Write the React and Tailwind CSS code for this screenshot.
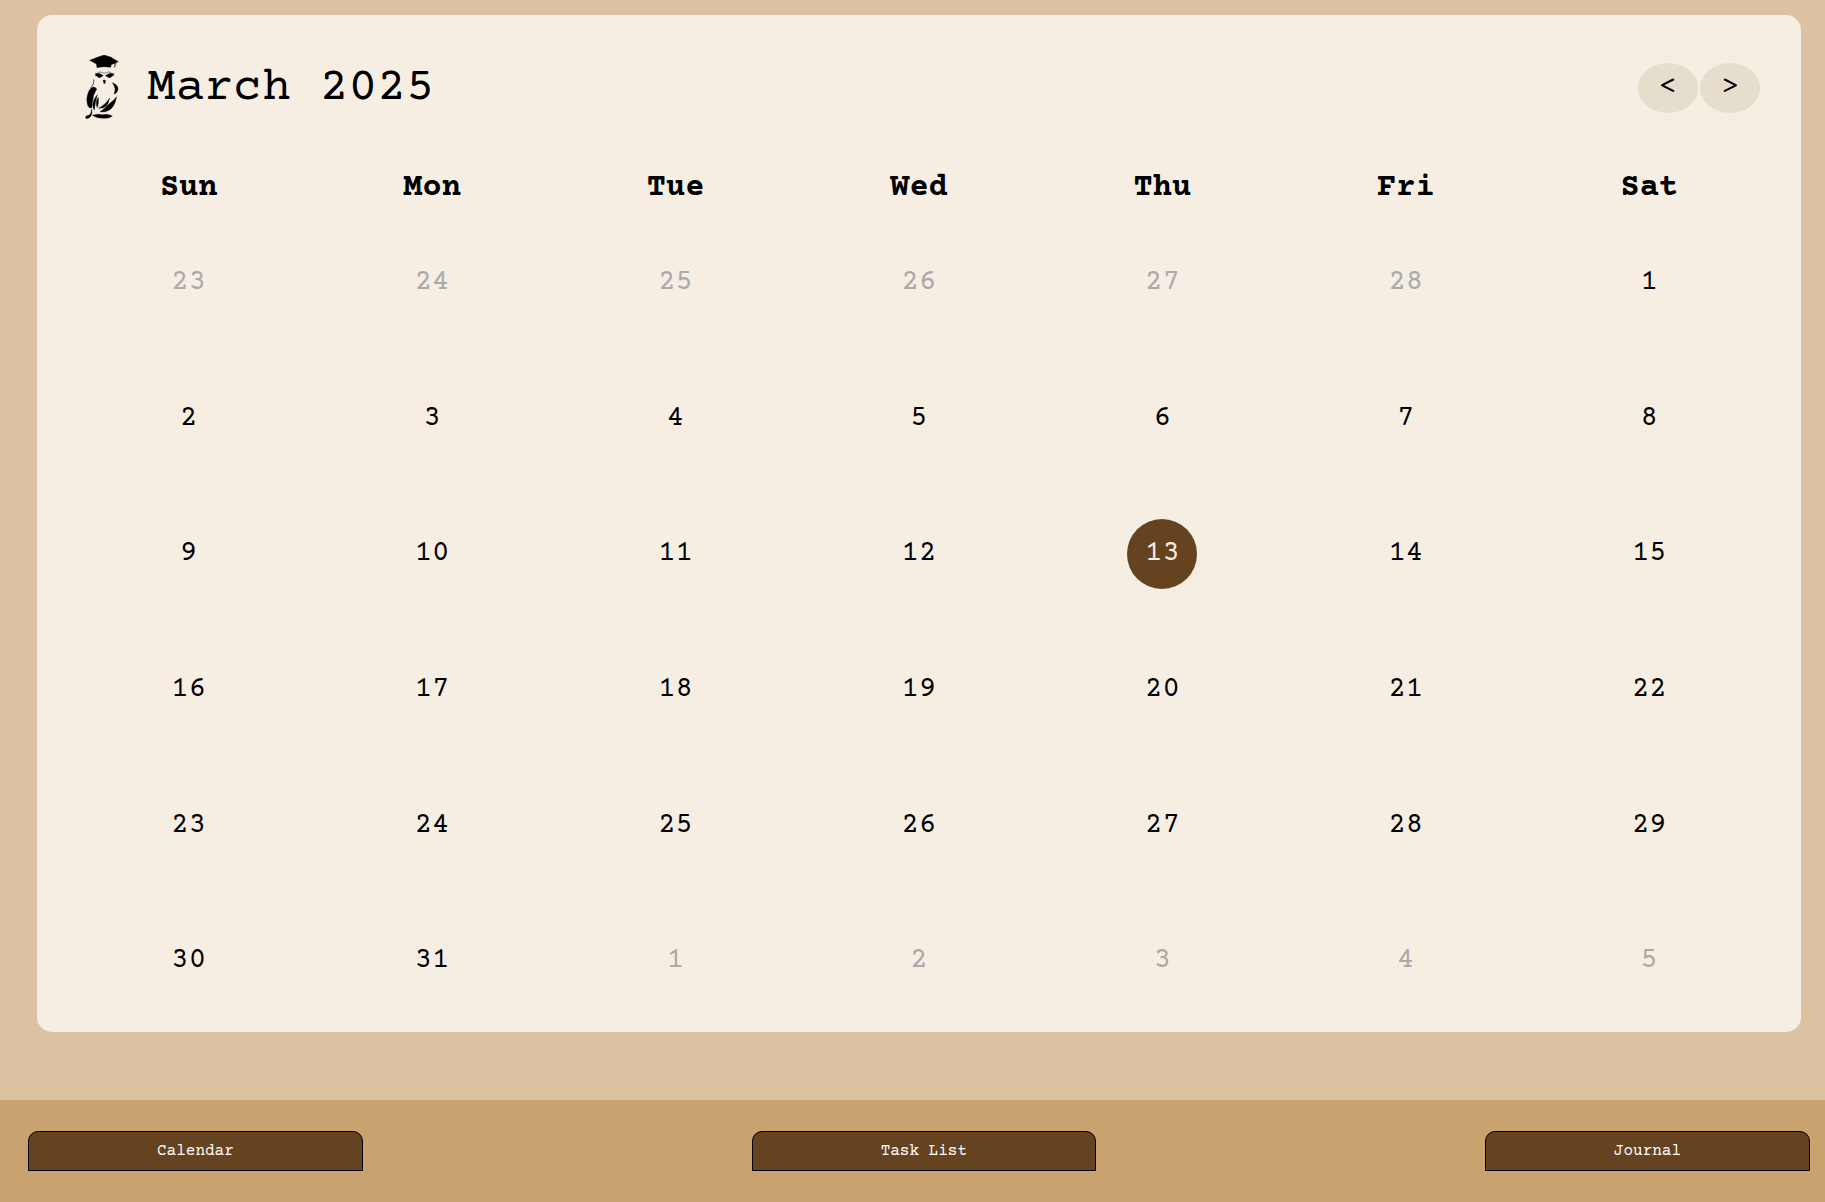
const DAYS = ["Sun", "Mon", "Tue", "Wed", "Thu", "Fri", "Sat"];
const TABS = ["Calendar", "Task List", "Journal"];
const TODAY = 13;

const previous = [23, 24, 25, 26, 27, 28].map((day) => ({ day, muted: true }));
const current = Array.from({ length: 31 }, (_, i) => ({ day: i + 1, muted: false }));
const next = [1, 2, 3, 4, 5].map((day) => ({ day, muted: true }));
const cells = [...previous, ...current, ...next];
const weeks = Array.from({ length: 6 }, (_, i) => cells.slice(i * 7, i * 7 + 7));

function Owl() {
  return (
    <svg
      viewBox="44 45 102 192"
      className="h-16 w-[34px] stroke-black stroke-1"
      role="img"
      aria-label="Owl logo"
    >
      <path d="M58 61 L83 51 L101 45 L121 51 L144 65 L123 74 L121 82 Q101 78 80 83 L78 72 Z" />
      <path d="M133 67 L137 69 L134 82 L132 82 Z" opacity="0.7" />
      <path d="M74 101 Q84 98 93 103 L99 107 Q94 109 92 112 Q84 115 79 108 Q77 106 74 107 Q80 105 74 101 Z" />
      <path d="M131 101 Q121 98 112 103 L105 107 Q111 109 113 112 Q121 115 126 108 Q128 106 132 107 Q126 105 131 101 Z" />
      <path d="M82 97 Q94 94 102 100 Q111 94 122 97" fill="none" strokeWidth="2" opacity="0.7" />
      <path d="M98 121 Q102 118 106 122 L104 130 L101 131 Z" />
      <path d="M70 118 Q73 130 61 144 Q66 139 69 132 Q72 124 70 118 Z" />
      <path d="M70 141 Q84 145 76 153 Q68 165 67 182 L64 204 Q54 206 51 192 Q47 176 52 163 Q57 143 70 141 Z" />
      <path d="M81 164 Q69 177 67 195 Q68 205 72 210 Q74 188 81 164 Z" />
      <path d="M84 172 Q73 187 81 203 Q86 190 84 172 Z" />
      <path d="M126 128 Q144 134 143 148 Q141 160 131 162 Q139 146 126 128 Z" />
      <path d="M118 174 Q107 193 85 205 Q112 207 118 174 Z" />
      <path d="M139 170 Q128 184 113 194 Q102 206 89 216 Q118 217 129 198 Q136 186 139 170 Z" />
      <path d="M64 207 Q63 221 56 226 Q47 226 45 232 Q47 238 54 235 Q68 227 64 207 Z" />
      <path d="M66 226 Q82 220 96 224 Q112 220 126 228 Q118 236 102 235 Q80 236 66 226 Z" />
    </svg>
  );
}

function MonthButton({ label, children }) {
  return (
    <button
      type="button"
      aria-label={label}
      className="h-[50px] w-[60px] rounded-[50%] bg-[#e5decd] text-[29px]"
    >
      {children}
    </button>
  );
}

export default function App() {
  return (
    <div className="flex min-h-screen flex-col bg-[#dbc3a1] font-['Courier_Prime','Liberation_Mono',monospace] text-black">
      <main className="mt-[15px] mr-6 mb-[68px] ml-[37px] flex flex-1 flex-col rounded-[15px] bg-[#f6eee3] px-[30px] pt-10 pb-[3px]">
        <header className="flex items-center pr-[11px] pl-[18px]">
          <Owl />
          <h1 className="ml-7 pt-0.5 text-5xl">March 2025</h1>
          <nav aria-label="Month" className="ml-auto flex gap-0.5 pt-0.5">
            <MonthButton label="Previous month">&lt;</MonthButton>
            <MonthButton label="Next month">&gt;</MonthButton>
          </nav>
        </header>
        <table className="mt-8 w-full flex-1 table-fixed border-collapse">
          <thead>
            <tr className="h-16">
              {DAYS.map((day) => (
                <th key={day} scope="col" className="px-0 pt-2.5 pb-0 text-[32px] leading-8 font-bold">
                  {day}
                </th>
              ))}
            </tr>
          </thead>
          <tbody>
            {weeks.map((week, i) => (
              <tr key={i} className="h-[135px]">
                {week.map(({ day, muted }) => (
                  <td key={day} className="p-0 text-center align-middle">
                    <span
                      className={
                        "inline-flex size-[70px] items-center justify-center rounded-full align-middle text-[29px] " +
                        (muted
                          ? "text-[#a9a9a9]"
                          : day === TODAY
                            ? "bg-[#654321] text-[#f6eee3]"
                            : "")
                      }
                    >
                      {day}
                    </span>
                  </td>
                ))}
              </tr>
            ))}
          </tbody>
        </table>
      </main>
      <footer className="bg-[#c8a26f] pt-[31px] pr-[15px] pb-[31px] pl-7">
        <nav aria-label="Sections" className="flex justify-between">
          {TABS.map((tab) => (
            <button
              key={tab}
              type="button"
              className="h-10 rounded-t-[10px] border border-black bg-[#654321] px-32 text-base text-white"
            >
              {tab}
            </button>
          ))}
        </nav>
      </footer>
    </div>
  );
}
